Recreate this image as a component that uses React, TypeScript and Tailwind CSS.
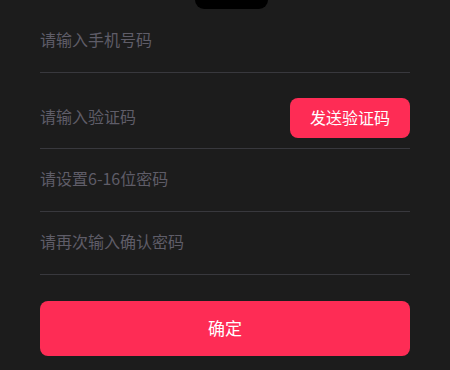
const fields = [
  { placeholder: "请输入手机号码", code: false },
  { placeholder: "请输入验证码", code: true },
  { placeholder: "请设置6-16位密码", code: false },
  { placeholder: "请再次输入确认密码", code: false },
];

export default function App() {
  return (
    <div
      className="relative h-[370px] w-[450px] overflow-hidden bg-[#1c1c1c] px-10"
      style={{ fontFamily: '"Noto Sans CJK SC", "Liberation Sans", sans-serif' }}
    >
      <div className="absolute left-[195px] top-0 h-[9px] w-[73px] rounded-b-[9px] bg-black" />

      <div className="flex flex-col pt-[10px]">
        {fields.map((f) => (
          <div
            key={f.placeholder}
            className={`flex items-center justify-between border-b border-[#38383d] ${
              f.code ? "h-[76px] pt-[25px] pb-[10px]" : "h-[63px]"
            }`}
          >
            <span className="mb-[4px] text-[16px] text-[#5f5d68]">{f.placeholder}</span>
            {f.code && (
              <button className="flex h-[40px] w-[120px] items-center justify-center rounded-[8px] bg-[#fe2c55] pb-[2px] text-[16px] text-white">
                发送验证码
              </button>
            )}
          </div>
        ))}
      </div>

      <button className="mt-[26px] flex h-[55px] w-full items-center justify-center rounded-[8px] bg-[#fe2c55] pb-[2px] text-[17px] text-white">
        确定
      </button>
    </div>
  );
}
